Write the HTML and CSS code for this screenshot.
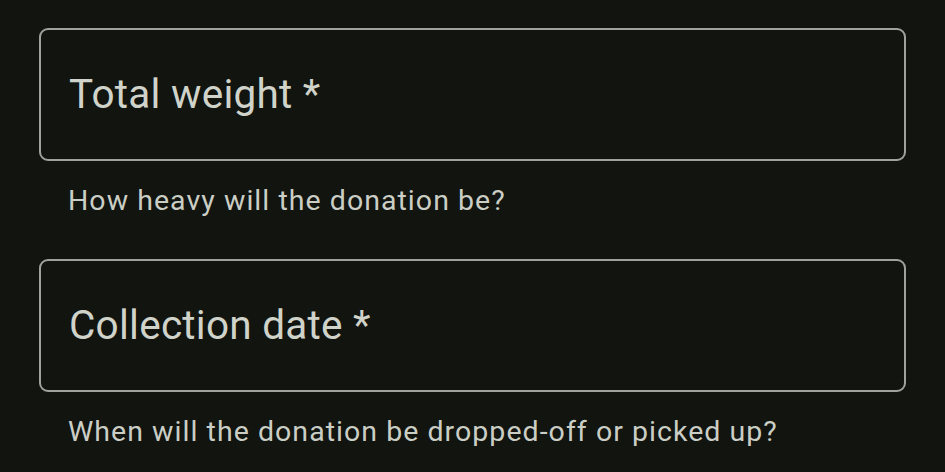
FILE: index.html
```html
<!DOCTYPE html>
<html lang="en">
<head>
<meta charset="utf-8">
<title>Donation form</title>
<link rel="stylesheet" href="styles.css">
</head>
<body>
<form class="form">
  <div class="group">
    <div class="field"><span class="label">Total weight *</span></div>
    <p class="helper">How heavy will the donation be?</p>
  </div>
  <div class="group">
    <div class="field"><span class="label">Collection date *</span></div>
    <p class="helper">When will the donation be dropped-off or picked up?</p>
  </div>
</form>
</body>
</html>
```

FILE: styles.css
```css
html, body {
  margin: 0;
  padding: 0;
  background: #11140f;
}
body {
  font-family: Roboto, "Noto Sans", sans-serif;
  color: #c8cbc2;
}
.form {
  display: flex;
  flex-direction: column;
  gap: 44px;
  padding: 28px 39px 0 39px;
  margin: 0;
}
.group {
  display: flex;
  flex-direction: column;
}
.field {
  box-sizing: border-box;
  height: 133px;
  border: 2px solid #a0a39b;
  border-radius: 9px;
  display: flex;
  align-items: center;
  padding: 0 0 2px 28px;
}
.label {
  font-size: 40.5px;
  line-height: 40px;
  letter-spacing: 0.25px;
  color: #d0d3ca;
}
.helper {
  margin: 26px 0 0 29px;
  font-size: 28.5px;
  line-height: 28px;
  letter-spacing: 1.04px;
  color: #cbcec5;
}
```
